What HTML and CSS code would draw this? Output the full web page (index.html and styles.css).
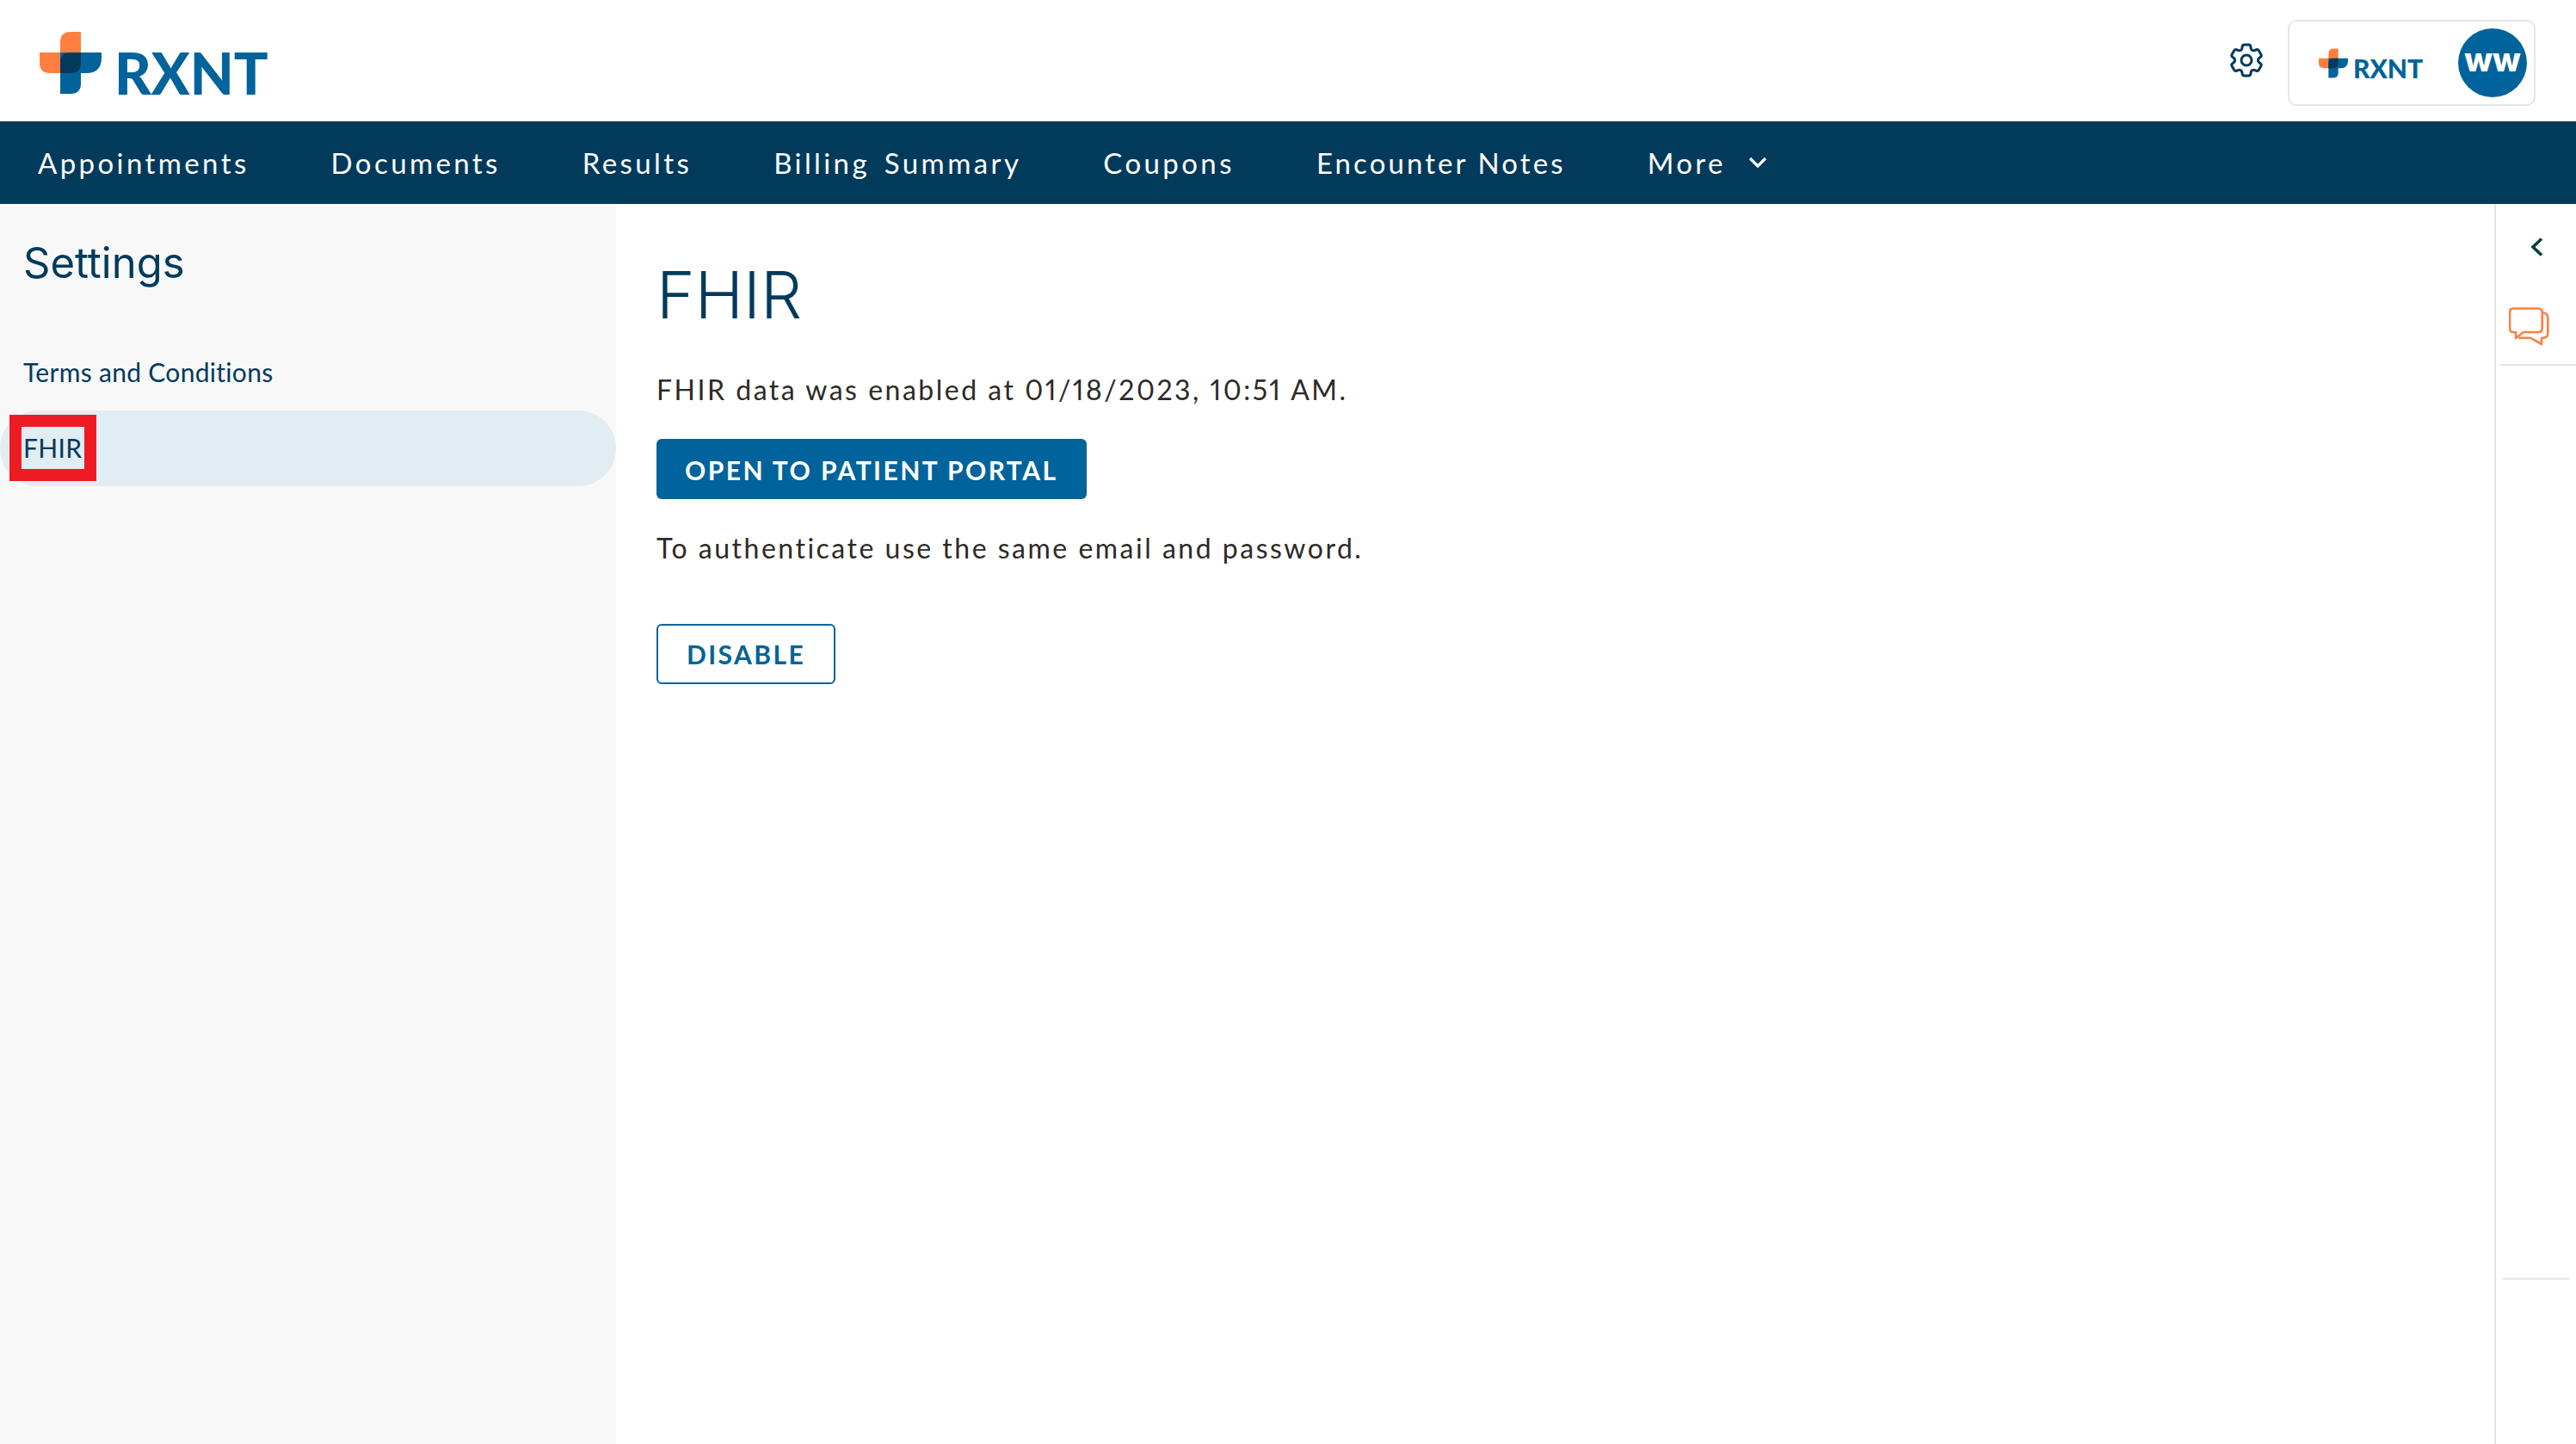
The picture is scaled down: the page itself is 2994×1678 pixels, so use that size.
FILE: index.html
```html
<!DOCTYPE html>
<html lang="en">
<head>
  <meta charset="UTF-8">
  <meta name="viewport" content="width=device-width, initial-scale=1.0"/>
  <title>FHIR Settings</title>
  <link rel="stylesheet" href="styles.css">
</head>
<body>

  <header class="topbar">
    <div class="logo">
      <svg class="logo-mark" viewBox="0 0 72 72">
        <path fill="#ff7f41" d="M24 12 Q24 0 36 0 H48 V48 H12 Q0 48 0 36 V24 H24 Z"/>
        <path fill="#00639b" d="M24 24 H72 V30 Q72 48 54 48 H48 V60 Q48 72 36 72 H24 Z"/>
        <path fill="#023a5c" d="M24 36 Q24 24 36 24 H48 V36 Q48 48 36 48 H24 Z"/>
      </svg>
      <span class="logo-text">RXNT</span>
    </div>
    <div class="top-right">
      <svg class="gear" viewBox="0 0 24 24" fill="none" stroke="#023a5c" stroke-width="1.5">
        <path d="M9.594 3.94c.09-.542.56-.94 1.11-.94h2.593c.55 0 1.02.398 1.11.94l.213 1.281c.063.374.313.686.645.87.074.04.147.083.22.127.325.196.72.257 1.075.124l1.217-.456a1.125 1.125 0 011.37.49l1.296 2.247a1.125 1.125 0 01-.26 1.431l-1.003.827c-.293.241-.438.613-.43.992a7.723 7.723 0 010 .255c-.008.378.137.75.43.991l1.004.827c.424.35.534.955.26 1.43l-1.298 2.247a1.125 1.125 0 01-1.369.491l-1.217-.456c-.355-.133-.75-.072-1.076.124a6.47 6.47 0 01-.22.128c-.331.183-.581.495-.644.869l-.213 1.281c-.09.543-.56.94-1.11.94h-2.594c-.55 0-1.019-.398-1.11-.94l-.213-1.281c-.062-.374-.312-.686-.644-.87a6.52 6.52 0 01-.22-.127c-.325-.196-.72-.257-1.076-.124l-1.217.456a1.125 1.125 0 01-1.369-.49l-1.297-2.247a1.125 1.125 0 01.26-1.431l1.004-.827c.292-.24.437-.613.43-.991a6.932 6.932 0 010-.255c.007-.38-.138-.751-.43-.992l-1.004-.827a1.125 1.125 0 01-.26-1.43l1.297-2.247a1.125 1.125 0 011.37-.491l1.216.456c.356.133.751.072 1.076-.124.072-.044.146-.086.22-.128.332-.183.582-.495.644-.869l.214-1.28z"/>
        <circle cx="12" cy="12" r="3"/>
      </svg>
      <div class="account">
        <div class="logo small">
          <svg class="logo-mark" viewBox="0 0 72 72">
            <path fill="#ff7f41" d="M24 12 Q24 0 36 0 H48 V48 H12 Q0 48 0 36 V24 H24 Z"/>
            <path fill="#00639b" d="M24 24 H72 V30 Q72 48 54 48 H48 V60 Q48 72 36 72 H24 Z"/>
            <path fill="#023a5c" d="M24 36 Q24 24 36 24 H48 V36 Q48 48 36 48 H24 Z"/>
          </svg>
          <span class="logo-text">RXNT</span>
        </div>
        <div class="avatar">ww</div>
      </div>
    </div>
  </header>

  <nav class="mainnav">
    <a>Appointments</a>
    <a>Documents</a>
    <a>Results</a>
    <a class="billing">Billing Summary</a>
    <a>Coupons</a>
    <a class="encounter">Encounter Notes</a>
    <a class="more">More
      <svg viewBox="0 0 22 14" fill="none" stroke="#fff" stroke-width="3.2">
        <path d="M2 2 L11 11 L20 2"/>
      </svg>
    </a>
  </nav>

  <div class="page">
    <aside class="sidebar">
      <h2>Settings</h2>
      <ul class="side-menu">
        <li>Terms and Conditions</li>
        <li class="active">FHIR<span class="highlight"></span></li>
      </ul>
    </aside>

    <main class="content">
      <h1>FHIR</h1>
      <p class="enabled">FHIR data was enabled at 01/18/2023, 10:51 AM.</p>
      <button class="btn primary">OPEN TO PATIENT PORTAL</button>
      <p class="auth">To authenticate use the same email and password.</p>
      <button class="btn outline">DISABLE</button>
    </main>

    <aside class="rail">
      <div class="rail-top">
        <svg class="collapse" viewBox="0 0 16 24" fill="none" stroke="#0a3d3f" stroke-width="3.6">
          <path d="M13 2.5 L3 12 L13 21.5"/>
        </svg>
        <svg class="chat" viewBox="0 0 48 46" fill="none" stroke="#ff7f41" stroke-width="2.6" stroke-linejoin="round">
          <path d="M5 1.5 H34 Q38.7 1.5 38.7 6 V24.5 Q38.7 29 34 29 H17 L8 36 V29 H5 Q1 29 1 24.5 V6 Q1 1.5 5 1.5 Z"/>
          <path d="M38.7 6.3 Q45.3 6.8 45.3 12 V30 Q45.3 35.7 39 35.7 H38 V43 L25.3 35.7 H11.3"/>
        </svg>
      </div>
      <div class="rail-bottom"></div>
    </aside>
  </div>

</body>
</html>
```

FILE: styles.css
```css
html, body {
  margin: 0;
  height: 100%;
}
body {
  display: flex;
  flex-direction: column;
  overflow: hidden;
  background: #fff;
  font-family: "Lato", "Open Sans", sans-serif;
  color: #023a5c;
}

/* top bar */
.topbar {
  height: 141px;
  display: flex;
  align-items: flex-start;
  justify-content: space-between;
  padding: 0 47px 0 46px;
  flex: none;
}
.logo {
  display: flex;
  align-items: flex-start;
  margin-top: 37px;
}
.logo-mark {
  width: 72px;
  height: 72px;
}
.logo-text {
  font-family: "Lato", sans-serif;
  font-weight: 900;
  font-size: 66px;
  line-height: 48px;
  margin: 24px 0 0 15px;
  color: #00639b;
}
.logo.small {
  margin: 0;
}
.logo.small .logo-mark {
  width: 34px;
  height: 35px;
}
.logo.small .logo-text {
  font-size: 30px;
  line-height: 24px;
  margin: 11px 0 0 6px;
}
.top-right {
  display: flex;
  align-items: flex-start;
}
.gear {
  width: 48px;
  height: 48px;
  margin: 46px 24px 0 0;
}
.account {
  box-sizing: border-box;
  width: 288px;
  height: 100px;
  margin-top: 23px;
  border: 2px solid #e6e6e6;
  border-radius: 10px;
  display: flex;
  align-items: center;
  justify-content: space-between;
  padding: 0 8px 0 34px;
}
.avatar {
  width: 80px;
  height: 80px;
  border-radius: 50%;
  background: #00639b;
  color: #fff;
  font-family: "Inter", sans-serif;
  font-weight: 800;
  font-size: 38px;
  line-height: 72px;
  text-align: center;
}

/* nav */
.mainnav {
  height: 96px;
  background: #023a5c;
  display: flex;
  align-items: center;
  gap: 95px;
  padding-left: 44px;
  flex: none;
}
.mainnav a {
  color: #fff;
  font-size: 33px;
  letter-spacing: 3.4px;
}
.mainnav .billing {
  word-spacing: 5px;
}
.mainnav .encounter {
  letter-spacing: 3.1px;
}
.mainnav .more {
  display: flex;
  align-items: center;
  gap: 26px;
}
.mainnav .more svg {
  width: 22px;
  height: 14px;
}

/* columns */
.page {
  flex: 1;
  display: flex;
  min-height: 0;
}
.sidebar {
  width: 716px;
  background: #f8f8f8;
  flex: none;
}
.sidebar h2 {
  font-family: "Inter", sans-serif;
  font-weight: 400;
  font-size: 49px;
  line-height: 60px;
  margin: 39px 0 0 27px;
}
.side-menu {
  list-style: none;
  margin: 53px 0 0;
  padding: 0;
  font-size: 30px;
  letter-spacing: 0.3px;
}
.side-menu li {
  height: 88px;
  line-height: 86px;
  padding-left: 27px;
}
.side-menu .active {
  position: relative;
  background: #e2ecf3;
  border-radius: 44px;
}
.highlight {
  position: absolute;
  box-sizing: border-box;
  left: 11px;
  top: 5px;
  width: 101px;
  height: 77px;
  border: 14px solid #ed1c24;
}

.content {
  flex: 1;
  padding-left: 47px;
}
.content h1 {
  font-family: "Inter", sans-serif;
  font-weight: 300;
  font-size: 76px;
  line-height: 90px;
  margin: 60px 0 0;
}
.content p {
  font-size: 32px;
  line-height: 40px;
  color: #2d2a26;
  margin: 0;
  font-variant-numeric: proportional-nums;
}
.content .enabled {
  padding-top: 46px;
  letter-spacing: 2.5px;
}
.content .auth {
  padding-top: 37px;
  letter-spacing: 2.5px;
}
.btn {
  display: block;
  box-sizing: border-box;
  height: 70px;
  padding: 0 33px;
  font-family: "Lato", sans-serif;
  font-size: 30px;
  font-weight: 700;
  letter-spacing: 2.45px;
  border-radius: 6px;
}
.primary {
  margin-top: 37px;
  padding-top: 2px;
  background: #00639b;
  border: none;
  color: #fff;
}
.outline {
  margin-top: 68px;
  background: #fff;
  border: 2px solid #00639b;
  color: #00639b;
}

/* right rail */
.rail {
  width: 93px;
  flex: none;
  border-left: 2px solid #e6e6e6;
  display: flex;
  flex-direction: column;
}
.rail-top {
  height: 186px;
  margin-left: 4px;
  border-bottom: 2px solid #e6e6e6;
  display: flex;
  flex-direction: column;
  align-items: flex-start;
}
.collapse {
  width: 16px;
  height: 24px;
  margin: 38px 0 0 36px;
}
.chat {
  width: 48px;
  height: 46px;
  margin: 58px 0 0 11px;
}
.rail-bottom {
  height: 1060px;
  margin: 0 7px 0 8px;
  border-bottom: 2px solid #e6e6e6;
}
```
